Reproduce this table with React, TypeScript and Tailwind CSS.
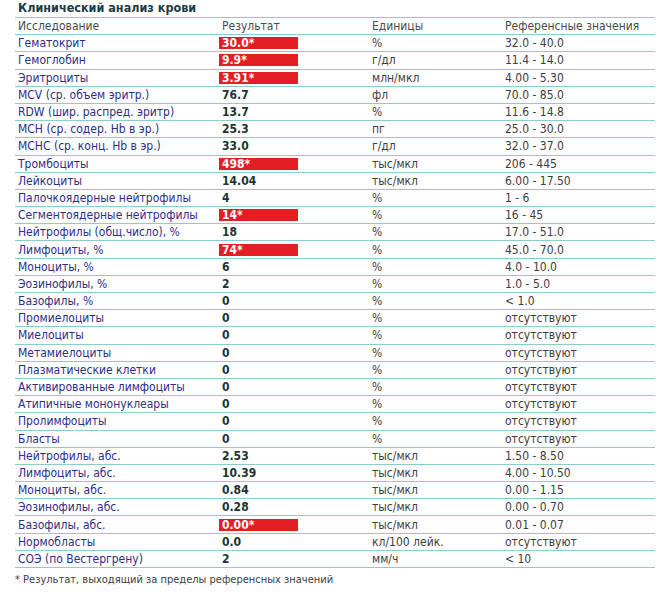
type Row = { name: string; value: string; unit: string; ref: string; flag?: boolean }

const rows: Row[] = [
  { name: 'Гематокрит', value: '30.0*', unit: '%', ref: '32.0 - 40.0', flag: true },
  { name: 'Гемоглобин', value: '9.9*', unit: 'г/дл', ref: '11.4 - 14.0', flag: true },
  { name: 'Эритроциты', value: '3.91*', unit: 'млн/мкл', ref: '4.00 - 5.30', flag: true },
  { name: 'MCV (ср. объем эритр.)', value: '76.7', unit: 'фл', ref: '70.0 - 85.0' },
  { name: 'RDW (шир. распред. эритр)', value: '13.7', unit: '%', ref: '11.6 - 14.8' },
  { name: 'MCH (ср. содер. Hb в эр.)', value: '25.3', unit: 'пг', ref: '25.0 - 30.0' },
  { name: 'MCHC (ср. конц. Hb в эр.)', value: '33.0', unit: 'г/дл', ref: '32.0 - 37.0' },
  { name: 'Тромбоциты', value: '498*', unit: 'тыс/мкл', ref: '206 - 445', flag: true },
  { name: 'Лейкоциты', value: '14.04', unit: 'тыс/мкл', ref: '6.00 - 17.50' },
  { name: 'Палочкоядерные нейтрофилы', value: '4', unit: '%', ref: '1 - 6' },
  { name: 'Сегментоядерные нейтрофилы', value: '14*', unit: '%', ref: '16 - 45', flag: true },
  { name: 'Нейтрофилы (общ.число), %', value: '18', unit: '%', ref: '17.0 - 51.0' },
  { name: 'Лимфоциты, %', value: '74*', unit: '%', ref: '45.0 - 70.0', flag: true },
  { name: 'Моноциты, %', value: '6', unit: '%', ref: '4.0 - 10.0' },
  { name: 'Эозинофилы, %', value: '2', unit: '%', ref: '1.0 - 5.0' },
  { name: 'Базофилы, %', value: '0', unit: '%', ref: '< 1.0' },
  { name: 'Промиелоциты', value: '0', unit: '%', ref: 'отсутствуют' },
  { name: 'Миелоциты', value: '0', unit: '%', ref: 'отсутствуют' },
  { name: 'Метамиелоциты', value: '0', unit: '%', ref: 'отсутствуют' },
  { name: 'Плазматические клетки', value: '0', unit: '%', ref: 'отсутствуют' },
  { name: 'Активированные лимфоциты', value: '0', unit: '%', ref: 'отсутствуют' },
  { name: 'Атипичные мононуклеары', value: '0', unit: '%', ref: 'отсутствуют' },
  { name: 'Пролимфоциты', value: '0', unit: '%', ref: 'отсутствуют' },
  { name: 'Бласты', value: '0', unit: '%', ref: 'отсутствуют' },
  { name: 'Нейтрофилы, абс.', value: '2.53', unit: 'тыс/мкл', ref: '1.50 - 8.50' },
  { name: 'Лимфоциты, абс.', value: '10.39', unit: 'тыс/мкл', ref: '4.00 - 10.50' },
  { name: 'Моноциты, абс.', value: '0.84', unit: 'тыс/мкл', ref: '0.00 - 1.15' },
  { name: 'Эозинофилы, абс.', value: '0.28', unit: 'тыс/мкл', ref: '0.00 - 0.70' },
  { name: 'Базофилы, абс.', value: '0.00*', unit: 'тыс/мкл', ref: '0.01 - 0.07', flag: true },
  { name: 'Нормобласты', value: '0.0', unit: 'кл/100 лейк.', ref: 'отсутствуют' },
  { name: 'СОЭ (по Вестергрену)', value: '2', unit: 'мм/ч', ref: '< 10' },
]

export default function App() {
  return (
    <div className="h-[600px] w-[669px] bg-white font-['DejaVu_Sans_Condensed','DejaVu_Sans',sans-serif] text-[12px] leading-none">
      <div className="w-[640px] pl-[15px] box-content">
        <div className="flex h-[17px] items-center pl-[3px] text-[12.5px] font-bold text-[#1d3b47]">
          Клинический анализ крови
        </div>
        <div className="border-t border-[#8ccccc]">
          <div className="flex h-[17.2px] items-center border-b border-[#8ccccc] text-[#4a4a4a]">
            <div className="w-[204px] pl-[3px]">Исследование</div>
            <div className="w-[153px] pl-[3px]">Результат</div>
            <div className="w-[133px]">Единицы</div>
            <div className="flex-1">Референсные значения</div>
          </div>
          {rows.map((r) => (
            <div key={r.name} className="flex h-[17.2px] items-center border-b border-[#8ccccc]">
              <div className="w-[204px] pl-[3px] text-[#2e2e86]">{r.name}</div>
              <div className="w-[153px]">
                {r.flag ? (
                  <div className="flex h-[12px] w-[79px] items-center bg-[#e31e24] pl-[3px] font-bold text-white">
                    {r.value}
                  </div>
                ) : (
                  <div className="pl-[3px] font-bold text-[#1c3333]">{r.value}</div>
                )}
              </div>
              <div className="w-[133px] text-[#3d3d3d]">{r.unit}</div>
              <div className="flex-1 text-[#3d3d3d]">{r.ref}</div>
            </div>
          ))}
        </div>
        <div className="pt-[6px] text-[11px] text-[#3d3d3d]">* Результат, выходящий за пределы референсных значений</div>
      </div>
    </div>
  )
}
